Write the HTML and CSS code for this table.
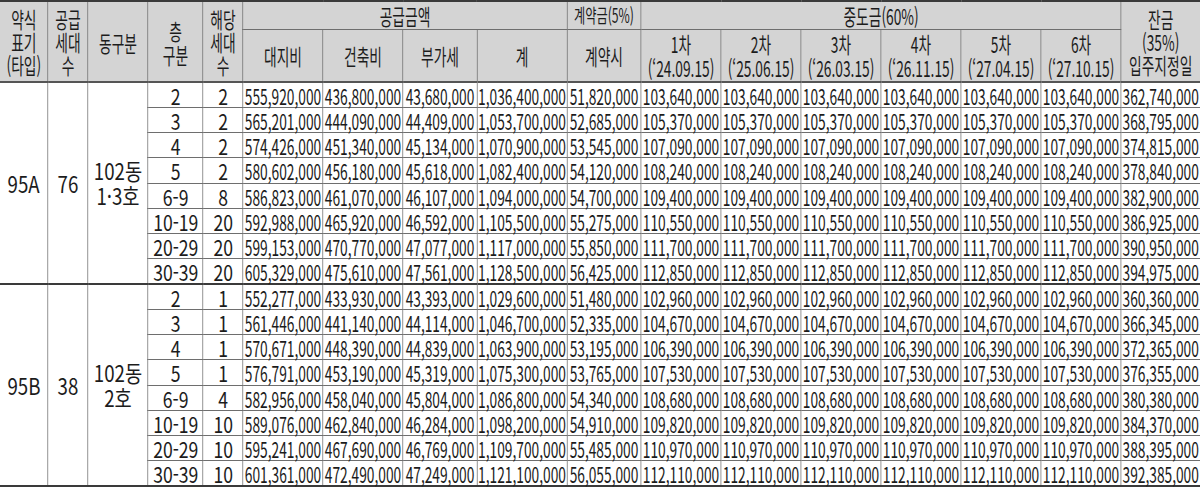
FILE: index.html
```html
<!DOCTYPE html>
<html lang="ko">
<head>
<meta charset="utf-8">
<title>공급금액표</title>
<link rel="stylesheet" href="styles.css">
</head>
<body>
<div class="sheet">
<table class="price">
<colgroup>
<col class="c-type"><col class="c-cnt"><col class="c-dong"><col class="c-floor"><col class="c-unit">
<col class="c-land"><col class="c-build"><col class="c-vat"><col class="c-sum"><col class="c-dep">
<col class="c-mid"><col class="c-mid"><col class="c-mid"><col class="c-mid"><col class="c-mid"><col class="c-mid">
<col class="c-bal">
</colgroup>
<thead>
<tr class="h1">
<th rowspan="2" class="tri">약식<br>표기<br>(타입)</th>
<th rowspan="2" class="tri">공급<br>세대<br>수</th>
<th rowspan="2">동구분</th>
<th rowspan="2" class="duo">층<br>구분</th>
<th rowspan="2" class="tri">해당<br>세대<br>수</th>
<th colspan="4">공급금액</th>
<th class="sm">계약금(5%)</th>
<th colspan="6">중도금(60%)</th>
<th rowspan="2" class="tri last">잔금<br>(35%)<br>입주지정일</th>
</tr>
<tr class="h2">
<th>대지비</th><th>건축비</th><th>부가세</th><th>계</th><th>계약시</th>
<th class="duo">1차<br>(‘24.09.15)</th>
<th class="duo">2차<br>(‘25.06.15)</th>
<th class="duo">3차<br>(‘26.03.15)</th>
<th class="duo">4차<br>(‘26.11.15)</th>
<th class="duo">5차<br>(‘27.04.15)</th>
<th class="duo">6차<br>(‘27.10.15)</th>
</tr>
</thead>
<tbody class="grp">
<tr><td rowspan="8" class="g"><span class="wg">95A</span></td><td rowspan="8" class="g"><span class="wg">76</span></td><td rowspan="8" class="g"><span class="wg">102동<br>1·3호</span></td><td><span class="w">2</span></td><td><span class="w">2</span></td><td>555,920,000</td><td>436,800,000</td><td>43,680,000</td><td>1,036,400,000</td><td>51,820,000</td><td>103,640,000</td><td>103,640,000</td><td>103,640,000</td><td>103,640,000</td><td>103,640,000</td><td>103,640,000</td><td>362,740,000</td></tr>
<tr><td><span class="w">3</span></td><td><span class="w">2</span></td><td>565,201,000</td><td>444,090,000</td><td>44,409,000</td><td>1,053,700,000</td><td>52,685,000</td><td>105,370,000</td><td>105,370,000</td><td>105,370,000</td><td>105,370,000</td><td>105,370,000</td><td>105,370,000</td><td>368,795,000</td></tr>
<tr><td><span class="w">4</span></td><td><span class="w">2</span></td><td>574,426,000</td><td>451,340,000</td><td>45,134,000</td><td>1,070,900,000</td><td>53,545,000</td><td>107,090,000</td><td>107,090,000</td><td>107,090,000</td><td>107,090,000</td><td>107,090,000</td><td>107,090,000</td><td>374,815,000</td></tr>
<tr><td><span class="w">5</span></td><td><span class="w">2</span></td><td>580,602,000</td><td>456,180,000</td><td>45,618,000</td><td>1,082,400,000</td><td>54,120,000</td><td>108,240,000</td><td>108,240,000</td><td>108,240,000</td><td>108,240,000</td><td>108,240,000</td><td>108,240,000</td><td>378,840,000</td></tr>
<tr><td><span class="w">6-9</span></td><td><span class="w">8</span></td><td>586,823,000</td><td>461,070,000</td><td>46,107,000</td><td>1,094,000,000</td><td>54,700,000</td><td>109,400,000</td><td>109,400,000</td><td>109,400,000</td><td>109,400,000</td><td>109,400,000</td><td>109,400,000</td><td>382,900,000</td></tr>
<tr><td><span class="w">10-19</span></td><td><span class="w">20</span></td><td>592,988,000</td><td>465,920,000</td><td>46,592,000</td><td>1,105,500,000</td><td>55,275,000</td><td>110,550,000</td><td>110,550,000</td><td>110,550,000</td><td>110,550,000</td><td>110,550,000</td><td>110,550,000</td><td>386,925,000</td></tr>
<tr><td><span class="w">20-29</span></td><td><span class="w">20</span></td><td>599,153,000</td><td>470,770,000</td><td>47,077,000</td><td>1,117,000,000</td><td>55,850,000</td><td>111,700,000</td><td>111,700,000</td><td>111,700,000</td><td>111,700,000</td><td>111,700,000</td><td>111,700,000</td><td>390,950,000</td></tr>
<tr><td><span class="w">30-39</span></td><td><span class="w">20</span></td><td>605,329,000</td><td>475,610,000</td><td>47,561,000</td><td>1,128,500,000</td><td>56,425,000</td><td>112,850,000</td><td>112,850,000</td><td>112,850,000</td><td>112,850,000</td><td>112,850,000</td><td>112,850,000</td><td>394,975,000</td></tr>
</tbody>
<tbody class="grp grp-b">
<tr><td rowspan="8" class="g"><span class="wg">95B</span></td><td rowspan="8" class="g"><span class="wg">38</span></td><td rowspan="8" class="g"><span class="wg">102동<br>2호</span></td><td><span class="w">2</span></td><td><span class="w">1</span></td><td>552,277,000</td><td>433,930,000</td><td>43,393,000</td><td>1,029,600,000</td><td>51,480,000</td><td>102,960,000</td><td>102,960,000</td><td>102,960,000</td><td>102,960,000</td><td>102,960,000</td><td>102,960,000</td><td>360,360,000</td></tr>
<tr><td><span class="w">3</span></td><td><span class="w">1</span></td><td>561,446,000</td><td>441,140,000</td><td>44,114,000</td><td>1,046,700,000</td><td>52,335,000</td><td>104,670,000</td><td>104,670,000</td><td>104,670,000</td><td>104,670,000</td><td>104,670,000</td><td>104,670,000</td><td>366,345,000</td></tr>
<tr><td><span class="w">4</span></td><td><span class="w">1</span></td><td>570,671,000</td><td>448,390,000</td><td>44,839,000</td><td>1,063,900,000</td><td>53,195,000</td><td>106,390,000</td><td>106,390,000</td><td>106,390,000</td><td>106,390,000</td><td>106,390,000</td><td>106,390,000</td><td>372,365,000</td></tr>
<tr><td><span class="w">5</span></td><td><span class="w">1</span></td><td>576,791,000</td><td>453,190,000</td><td>45,319,000</td><td>1,075,300,000</td><td>53,765,000</td><td>107,530,000</td><td>107,530,000</td><td>107,530,000</td><td>107,530,000</td><td>107,530,000</td><td>107,530,000</td><td>376,355,000</td></tr>
<tr><td><span class="w">6-9</span></td><td><span class="w">4</span></td><td>582,956,000</td><td>458,040,000</td><td>45,804,000</td><td>1,086,800,000</td><td>54,340,000</td><td>108,680,000</td><td>108,680,000</td><td>108,680,000</td><td>108,680,000</td><td>108,680,000</td><td>108,680,000</td><td>380,380,000</td></tr>
<tr><td><span class="w">10-19</span></td><td><span class="w">10</span></td><td>589,076,000</td><td>462,840,000</td><td>46,284,000</td><td>1,098,200,000</td><td>54,910,000</td><td>109,820,000</td><td>109,820,000</td><td>109,820,000</td><td>109,820,000</td><td>109,820,000</td><td>109,820,000</td><td>384,370,000</td></tr>
<tr><td><span class="w">20-29</span></td><td><span class="w">10</span></td><td>595,241,000</td><td>467,690,000</td><td>46,769,000</td><td>1,109,700,000</td><td>55,485,000</td><td>110,970,000</td><td>110,970,000</td><td>110,970,000</td><td>110,970,000</td><td>110,970,000</td><td>110,970,000</td><td>388,395,000</td></tr>
<tr><td><span class="w">30-39</span></td><td><span class="w">10</span></td><td>601,361,000</td><td>472,490,000</td><td>47,249,000</td><td>1,121,100,000</td><td>56,055,000</td><td>112,110,000</td><td>112,110,000</td><td>112,110,000</td><td>112,110,000</td><td>112,110,000</td><td>112,110,000</td><td>392,385,000</td></tr>
</tbody>
</table>
</div>
</body>
</html>
```
FILE: styles.css
```css
html, body {
  margin: 0;
  padding: 0;
  background: #ffffff;
}

.sheet {
  --sx: 0.625;
  width: 1200px;
  height: 489px;
  overflow: hidden;
}

.price {
  width: calc(1200px / var(--sx));
  table-layout: fixed;
  border-collapse: collapse;
  transform: scaleX(var(--sx));
  transform-origin: 0 0;
  font-family: "Noto Sans CJK KR", "Noto Sans", sans-serif;
  font-size: 22px;
  line-height: 22px;
  color: #1c1c1c;
  border-top: 2px solid #3a3a3a;
  border-bottom: 2px solid #3a3a3a;
}

.c-type  { width: calc(48px / var(--sx)); }
.c-cnt   { width: calc(40px / var(--sx)); }
.c-dong  { width: calc(60px / var(--sx)); }
.c-floor { width: calc(55px / var(--sx)); }
.c-unit  { width: calc(40px / var(--sx)); }
.c-land  { width: calc(80px / var(--sx)); }
.c-build { width: calc(80px / var(--sx)); }
.c-vat   { width: calc(74px / var(--sx)); }
.c-sum   { width: calc(90px / var(--sx)); }
.c-dep   { width: calc(74px / var(--sx)); }
.c-mid   { width: calc(80px / var(--sx)); }
.c-bal   { width: calc(79px / var(--sx)); }

.price th,
.price td {
  padding: 0;
  text-align: center;
  vertical-align: middle;
  white-space: nowrap;
  border-top: 1px solid #6e6e6e;
  border-bottom: 1px solid #6e6e6e;
  border-left: 1px solid #555555;
  border-right: 1px solid #555555;
}

.price th {
  background: #d4d4d4;
  font-weight: 400;
}

.price .tri { line-height: 23px; }
.price .duo { line-height: 24px; }

.price tr > :first-child { border-left: none; }
.price tr > .last,
.price tbody tr > :last-child { border-right: none; }

.price .h1 { height: 28px; }
.price .h2 { height: 53px; }
.price .h2 th,
.price .h1 th[rowspan] { border-bottom: 2px solid #555555; }

.price .sm { font-size: 19.5px; }

.price tbody tr { height: 25.25px; }
.price tbody td { line-height: 22px; }

/* floor / unit counts use a wider letter shape than the money columns */
.price .w {
  display: inline-block;
  transform: scaleX(1.28);
}

/* group labels (type, count, building) */
.price tbody .g {
  font-size: 23px;
  line-height: 25px;
}
.price .wg {
  display: inline-block;
  transform: scaleX(1.3);
}

.price .grp-b tr:first-child > * { border-top: 2px solid #3a3a3a; }
```
